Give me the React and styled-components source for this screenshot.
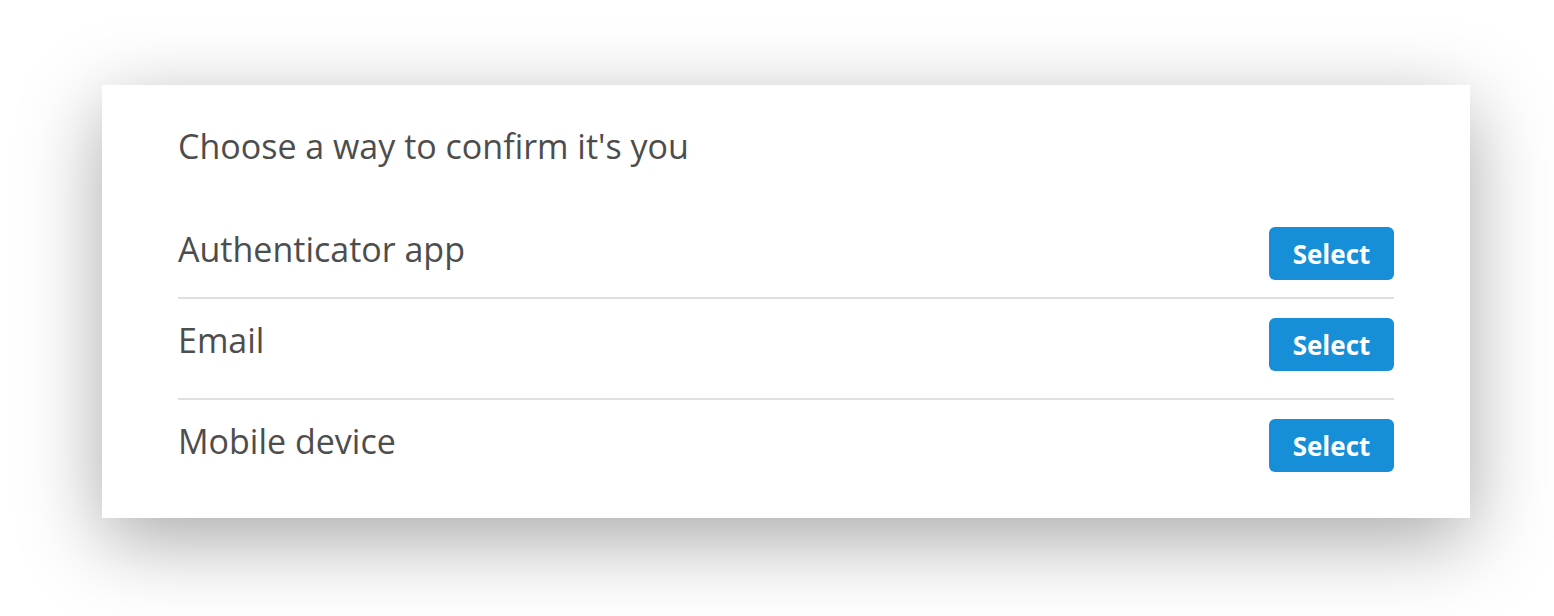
import styled, { createGlobalStyle } from "styled-components";

const GlobalStyle = createGlobalStyle`
  body {
    margin: 0;
    background: #fff;
    font-family: "Open Sans", "Liberation Sans", sans-serif;
  }
`

const Page = styled.div`
  padding: 85px 84px 98px 102px;
`

const Card = styled.div`
  width: 1368px;
  height: 433px;
  box-sizing: border-box;
  background: #fff;
  padding: 0 76px;
  box-shadow: 0 22px 75px rgba(0, 0, 0, 0.34);
`

const Title = styled.h1`
  margin: 0;
  padding-top: 41px;
  font-size: 34px;
  font-weight: 400;
  line-height: 40px;
  color: #4d4d4d;
`

const List = styled.div`
  margin-top: 41px;
`

const Row = styled.div`
  display: flex;
  align-items: center;
  justify-content: space-between;
  padding: ${(p) => (p.first ? "20px 0 17px" : "19px 0 27px")};
  border-top: ${(p) => (p.first ? "none" : "2px solid #e0e0e0")};
`

const Label = styled.span`
  padding-bottom: 10px;
  font-size: 34px;
  line-height: 40px;
  color: #4d4d4d;
`

const SelectButton = styled.button`
  width: 125px;
  height: 53px;
  padding: 0;
  border: none;
  border-radius: 6px;
  background: #168fd8;
  color: #fff;
  font-family: "Open Sans", "Liberation Sans", sans-serif;
  font-weight: 700;
  font-size: 26px;
  cursor: pointer;
`

const options = ["Authenticator app", "Email", "Mobile device"];

export default function App() {
  return (
    <>
      <GlobalStyle />
      <Page>
        <Card>
          <Title>Choose a way to confirm it's you</Title>
          <List>
            {options.map((name, i) => (
              <Row key={name} first={i === 0}>
                <Label>{name}</Label>
                <SelectButton>Select</SelectButton>
              </Row>
            ))}
          </List>
        </Card>
      </Page>
    </>
  );
}
